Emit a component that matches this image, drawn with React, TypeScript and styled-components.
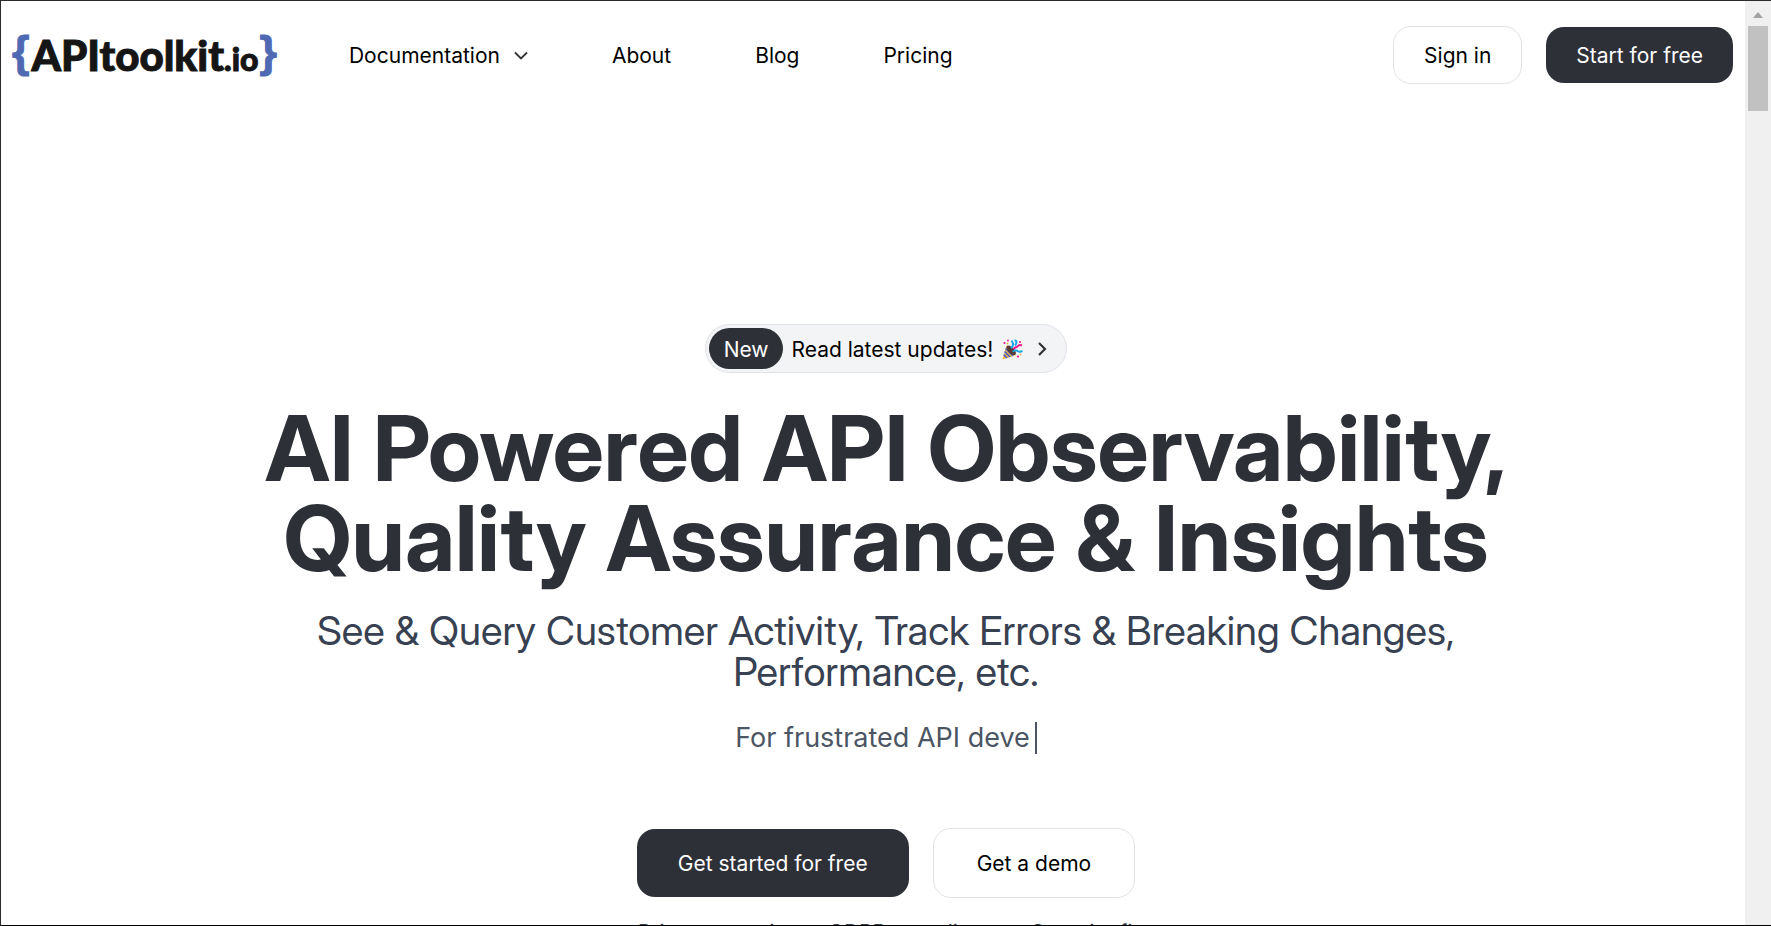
import React from "react";
import styled, { createGlobalStyle } from "styled-components";

const ink = "#2e3038";

const GlobalStyle = createGlobalStyle`
  * { box-sizing: border-box; }
  body { margin: 0; background: #fff; color: #000; font-family: Inter, "Liberation Sans", sans-serif; font-size: 21px; line-height: 30px; overflow: hidden; }
  a { color: inherit; text-decoration: none; }
`;

const Frame = styled.div`
  position: relative;
  height: 100vh;
  overflow: hidden;
  border: 1px solid #2b2a2d;
  border-right: 0;
  border-bottom-color: #000;
`;

const Header = styled.header`
  display: flex;
  align-items: center;
  padding: 24px 38px 24px 11px;
`;

const Logo = styled.a`
  display: flex;
  align-items: flex-start;
  height: 60px;
  color: #151515;
  font-family: "Lato Black", Lato, "Liberation Sans", sans-serif;
  font-weight: 900;
  font-size: 42px;
  line-height: 60px;
  -webkit-text-stroke: 1px currentColor;
`;

const Wordmark = styled.span`
  padding: 0 1px 0 2px;
`;

const Brace = styled.span`
  color: #4f69b3;
  font: bold 45px/54px "Liberation Sans", sans-serif;
`;

const Suffix = styled.span`
  font-size: 32px;
`;

const Nav = styled.nav`
  display: flex;
  flex: 1;
  align-items: center;
  gap: 84px;
  margin-left: 72px;
  padding-top: 2px;
`;

const NavLink = styled.a`
  display: flex;
  align-items: center;
  gap: 14px;
`;

const Row = styled.div<{ $gap: number }>`
  display: flex;
  align-items: center;
  justify-content: center;
  gap: ${(p) => p.$gap}px;
`;

const Button = styled.button<{ $primary?: boolean; $large?: boolean }>`
  height: ${(p) => (p.$large ? 68 : 56) + (p.$primary ? 0 : 2)}px;
  padding: 2px ${(p) => (p.$large ? (p.$primary ? 41 : 43) : 30)}px 0;
  border: ${(p) => (p.$primary ? "0" : "1px solid #e0e2e7")};
  border-radius: 18px;
  background: ${(p) => (p.$primary ? ink : "#fff")};
  color: ${(p) => (p.$primary ? "#fff" : "#000")};
  font: inherit;
  white-space: nowrap;
`;

const Hero = styled.main`
  display: flex;
  flex-direction: column;
  align-items: center;
  text-align: center;
  padding-top: 215px;
`;

const Announcement = styled.a`
  display: flex;
  align-items: center;
  height: 49px;
  padding: 0 19px 0 3px;
  border: 1px solid #e0e2e8;
  border-radius: 25px;
  background: #f3f4f6;
`;

const NewTag = styled.span`
  height: 41px;
  padding: 0 14px 0 15px;
  margin-right: 9px;
  border-radius: 21px;
  line-height: 43px;
  background: ${ink};
  color: #fff;
`;

const AnnouncementText = styled.span`
  padding-top: 2px;
`;

const Title = styled.h1`
  margin: 30px 0 0;
  max-width: 1344px;
  color: ${ink};
  font-family: "Inter Display", Inter, "Liberation Sans", sans-serif;
  font-size: 91px;
  line-height: 90px;
  font-weight: 700;
`;

const Subtitle = styled.p`
  margin: 27px 0 0;
  max-width: 1248px;
  color: #374151;
  font-family: "Inter Display", Inter, "Liberation Sans", sans-serif;
  font-size: 40px;
  line-height: 41px;
`;

const Typed = styled.p`
  display: flex;
  align-items: center;
  margin: 25px 0 0;
  color: #4b5563;
  font-size: 27px;
  line-height: 42px;
`;

const Caret = styled.span`
  width: 2px;
  height: 32px;
  margin-left: 5px;
  background: #4b5563;
`;

const Actions = styled(Row)`
  margin-top: 69px;
`;

const Assurances = styled(Row)`
  margin-top: 20px;
  padding-left: 24px;
  color: #374151;
`;

const Scrollbar = styled.div`
  position: absolute;
  top: 0;
  right: 0;
  bottom: 0;
  display: flex;
  flex-direction: column;
  align-items: center;
  width: 26px;
  background: #f0f0f0;
`;

const Thumb = styled.div`
  width: 20px;
  height: 85px;
  margin-top: 4px;
  background: #c1c1c1;
`;

const PartyPopper = () => (
  <svg width="21" height="21" viewBox="0 0 21 21" fill="none" aria-hidden="true">
    <path d="M4.500 6.500 14 16 .5 20.500Z" fill="#f3b63d" />
    <path d="m3.600 9.500 7.400 7.400M2.600 12.500l5.500 5.500M1.700 15.700l3.300 3.300" stroke="#4d62c9" strokeWidth="1.700" />
    <ellipse cx="9.200" cy="11.300" rx="6" ry="3" transform="rotate(45 9.200 11.300)" fill="#5a3a35" />
    <path d="M9 9c2.500-2 3-4 .5-7.500M12.500 1.500c2-.5 3 2 .5 5" stroke="#1ba9e8" strokeWidth="2" />
    <path d="M11 13c1-2 3-2 4.500-1s3 1 5 0" stroke="#1ba9e8" strokeWidth="2" />
    <path d="M11.500 10c1.500-2.500 3-1 4-2.500s2-2 4.500-1" stroke="#ed168c" strokeWidth="2" />
    <circle cx="2.500" cy="4" r="1.100" fill="#ed168c" />
    <circle cx="18" cy="3" r="1.100" fill="#ed168c" />
    <circle cx="6" cy="1.500" r=".9" fill="#ed168c" />
    <circle cx="16" cy="17.500" r="1.100" fill="#ed168c" />
    <circle cx="5.500" cy="4.500" r=".9" fill="#f3b63d" />
    <circle cx="18.500" cy="15.500" r=".9" fill="#f3b63d" />
  </svg>
);

const Popper = styled(Row)`
  margin: 2px 14px 0 9px;
`;

export default function App() {
  return (
    <Frame>
      <GlobalStyle />
      <Header>
        <Logo href="#">
          <Brace>{"{"}</Brace>
          <Wordmark>APItoolkit<Suffix>.io</Suffix></Wordmark>
          <Brace>{"}"}</Brace>
        </Logo>
        <Nav>
          <NavLink href="#docs">
            Documentation
            <svg width="14" height="10" viewBox="0 0 14 10" fill="none" stroke="#333" strokeWidth="1.8" aria-hidden="true"><path d="m1 1.5 6 6 6-6" /></svg>
          </NavLink>
          <NavLink href="#about">About</NavLink>
          <NavLink href="#blog">Blog</NavLink>
          <NavLink href="#pricing">Pricing</NavLink>
        </Nav>
        <Row $gap={24}>
          <Button>Sign in</Button>
          <Button $primary>Start for free</Button>
        </Row>
      </Header>
      <Hero>
        <Announcement href="#updates">
          <NewTag>New</NewTag>
          <AnnouncementText>Read latest updates!</AnnouncementText>
          <Popper as="span" $gap={0}><PartyPopper /></Popper>
          <svg width="10" height="14" viewBox="0 0 10 14" fill="none" stroke="#333" strokeWidth="2.2" aria-hidden="true"><path d="m2 1 6 6-6 6" /></svg>
        </Announcement>
        <Title>AI Powered API Observability, Quality Assurance &amp; Insights</Title>
        <Subtitle>See &amp; Query Customer Activity, Track Errors &amp; Breaking Changes, Performance, etc.</Subtitle>
        <Typed>For frustrated API deve<Caret /></Typed>
        <Actions $gap={24}>
          <Button $primary $large>Get started for free</Button>
          <Button $large>Get a demo</Button>
        </Actions>
        <Assurances $gap={42}>
          <span>Privacy centric</span>
          <span>GDPR compliant</span>
          <span>Security first</span>
        </Assurances>
      </Hero>
      <Scrollbar aria-hidden="true">
        <svg width="26" height="21" viewBox="0 0 26 21"><path d="M8 17 13 11l5 6Z" fill="#a3a3a3" /></svg>
        <Thumb />
      </Scrollbar>
    </Frame>
  );
}
